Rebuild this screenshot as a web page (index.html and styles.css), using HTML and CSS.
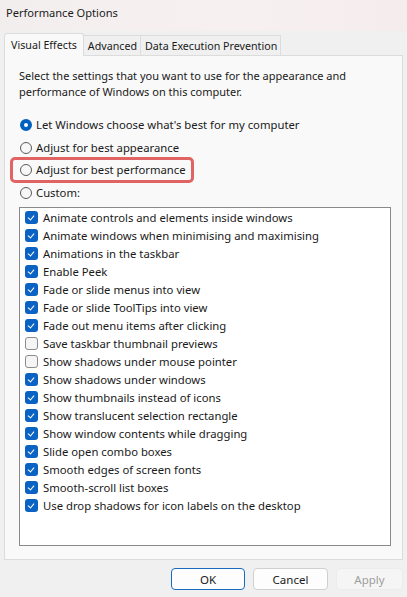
FILE: index.html
```html
<!DOCTYPE html>
<html>
<head>
<meta charset="utf-8">
<link rel="stylesheet" href="styles.css">
</head>
<body>
<div class="window">
  <div class="titlebar">Performance Options</div>
  <div class="tabs">
    <div class="tab active">Visual Effects</div>
    <div class="tab">Advanced</div>
    <div class="tab">Data Execution Prevention</div>
  </div>
  <div class="panel">
    <p class="intro">Select the settings that you want to use for the appearance and performance of Windows on this computer.</p>
    <div class="radios">
      <div class="radio-row"><span class="radio checked"></span>Let Windows choose what's best for my computer</div>
      <div class="radio-row"><span class="radio"></span>Adjust for best appearance</div>
      <div class="radio-row highlight"><span class="radio"></span>Adjust for best performance</div>
      <div class="radio-row"><span class="radio"></span>Custom:</div>
    </div>
    <div class="listbox">
      <div class="check-row"><span class="cb on"></span>Animate controls and elements inside windows</div>
      <div class="check-row"><span class="cb on"></span>Animate windows when minimising and maximising</div>
      <div class="check-row"><span class="cb on"></span>Animations in the taskbar</div>
      <div class="check-row"><span class="cb on"></span>Enable Peek</div>
      <div class="check-row"><span class="cb on"></span>Fade or slide menus into view</div>
      <div class="check-row"><span class="cb on"></span>Fade or slide ToolTips into view</div>
      <div class="check-row"><span class="cb on"></span>Fade out menu items after clicking</div>
      <div class="check-row"><span class="cb"></span>Save taskbar thumbnail previews</div>
      <div class="check-row"><span class="cb"></span>Show shadows under mouse pointer</div>
      <div class="check-row"><span class="cb on"></span>Show shadows under windows</div>
      <div class="check-row"><span class="cb on"></span>Show thumbnails instead of icons</div>
      <div class="check-row"><span class="cb on"></span>Show translucent selection rectangle</div>
      <div class="check-row"><span class="cb on"></span>Show window contents while dragging</div>
      <div class="check-row"><span class="cb on"></span>Slide open combo boxes</div>
      <div class="check-row"><span class="cb on"></span>Smooth edges of screen fonts</div>
      <div class="check-row"><span class="cb on"></span>Smooth-scroll list boxes</div>
      <div class="check-row"><span class="cb on"></span>Use drop shadows for icon labels on the desktop</div>
    </div>
  </div>
  <div class="footer">
    <button class="btn default">OK</button>
    <button class="btn">Cancel</button>
    <button class="btn disabled">Apply</button>
  </div>
</div>
</body>
</html>
```
FILE: styles.css
```css
html, body {
  margin: 0;
  padding: 0;
}
body {
  width: 407px;
  height: 597px;
  background: #f0f0f0;
  font-family: "Noto Sans", "Open Sans", sans-serif;
  font-size: 11.3px;
  color: #1a1a1a;
  overflow: hidden;
}
.window {
  display: flex;
  flex-direction: column;
  height: 597px;
}
.titlebar {
  height: 31px;
  box-sizing: border-box;
  padding: 5px 0 0 6px;
  background: linear-gradient(90deg, #f3eeee, #f7f0f0 60%, #f5eded);
  font-size: 11.1px;
  color: #1c1c1c;
}
.tabs {
  display: flex;
  align-items: flex-end;
  height: 24px;
  padding-left: 4px;
  position: relative;
  z-index: 1;
  font-size: 10.7px;
}
.tab {
  height: 20px;
  box-sizing: border-box;
  padding: 2px 3px 0 4px;
  border: 1px solid #dcdcdc;
  border-bottom: none;
  border-left: none;
  background: #f0f0f0;
  line-height: 16px;
  white-space: nowrap;
}
.tab.active {
  height: 23px;
  padding: 3px 6px 0 6px;
  border-left: 1px solid #dcdcdc;
  background: #f9f9f9;
  margin-bottom: -1px;
  border-radius: 3px 3px 0 0;
}
.panel {
  margin: 0 4px;
  height: 505px;
  box-sizing: border-box;
  border: 1px solid #dcdcdc;
  background: #f9f9f9;
  padding: 12px 11px 0 14px;
}
.intro {
  margin: 0;
  line-height: 16px;
  width: 340px;
  font-size: 11px;
}
.radios {
  margin-top: 17px;
  display: flex;
  flex-direction: column;
  gap: 6.5px;
}
.radio-row {
  display: flex;
  align-items: center;
  height: 16px;
  line-height: 16px;
  position: relative;
}
.radio {
  border: 1px solid #5a5a5a;
  border-radius: 50%;
  box-sizing: border-box;
  margin: 0 4px 0 1px;
  background: #f7f7f7;
  width: 12px;
  height: 12px;
}
.radio.checked {
  border: 4px solid #0060c0;
  background: #fff;
}
.highlight::before {
  content: "";
  position: absolute;
  left: -9px;
  top: -5px;
  width: 178px;
  height: 20px;
  border: 3px solid #e16464;
  border-radius: 5px;
}
.listbox {
  margin-top: 6px;
  height: 339px;
  box-sizing: border-box;
  border: 1px solid #8a8a8a;
  background: #fff;
  padding: 1px 0 0 5px;
}
.check-row {
  display: flex;
  align-items: center;
  height: 18px;
  line-height: 18px;
  white-space: nowrap;
}
.cb {
  width: 13px;
  height: 13px;
  box-sizing: border-box;
  border-radius: 3px;
  border: 1px solid #8c8c8c;
  background: #f5f5f5;
  margin-right: 5px;
  flex: none;
  position: relative;
}
.cb.on {
  border: none;
  background: #0a63c2;
}
.cb.on::after {
  content: "";
  position: absolute;
  left: 4px;
  top: 2.5px;
  width: 3px;
  height: 5px;
  border-right: 1.3px solid #fff;
  border-bottom: 1.3px solid #fff;
  transform: rotate(40deg);
}
.footer {
  display: flex;
  justify-content: flex-end;
  gap: 8px;
  padding: 8px 4px 0 0;
}
.btn {
  font-family: inherit;
  font-size: 11.5px;
  height: 22px;
  width: 75px;
  box-sizing: border-box;
  border: 1px solid #d0d0d0;
  border-radius: 4px;
  background: #fdfdfd;
  color: #1a1a1a;
  padding: 0;
}
.btn.default {
  width: 74px;
  border: 1px solid #1a6bbf;
}
.btn.disabled {
  width: 67px;
  color: #9e9e9e;
  border-color: #ececec;
  background: #f5f5f5;
}
```
